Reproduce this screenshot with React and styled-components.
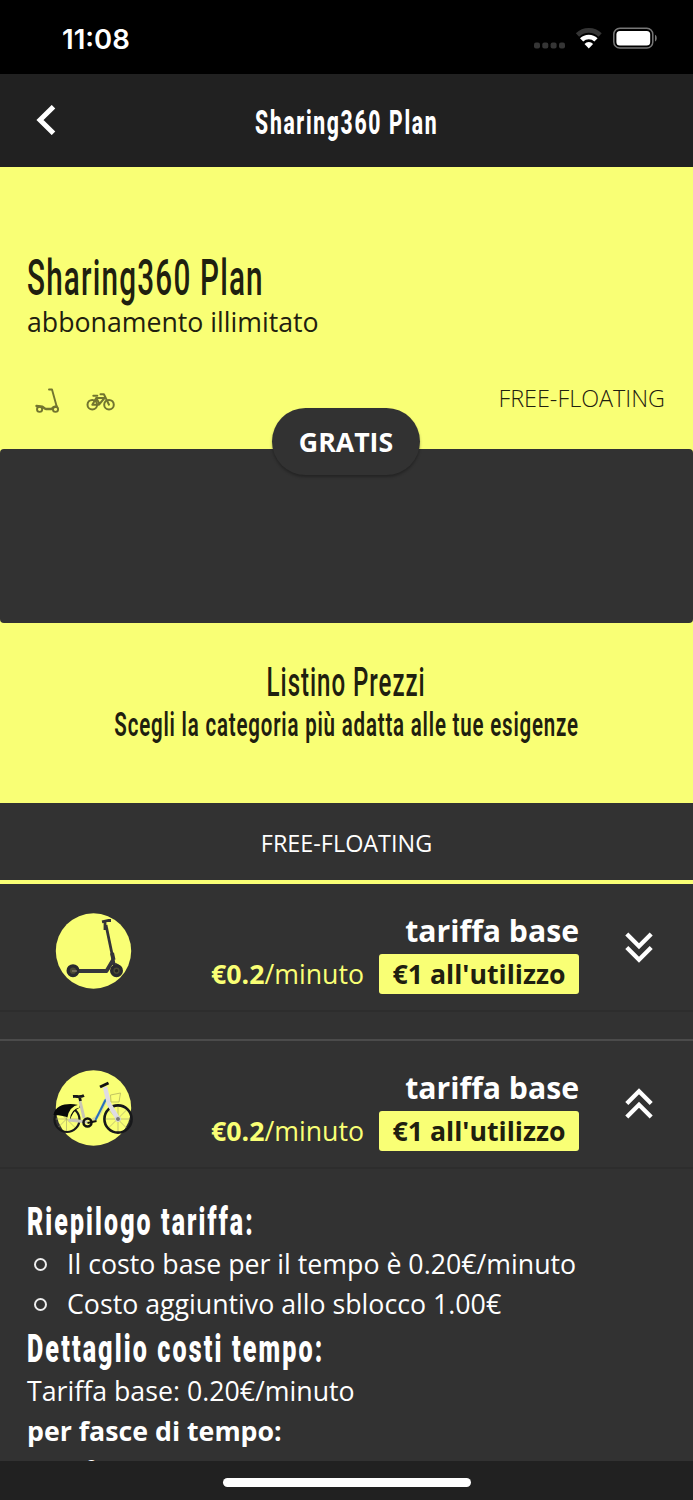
import React, { useState } from 'react'
import styled, { createGlobalStyle, css } from 'styled-components'

const yellow = '#f9ff75'
const dark = '#323232'
const darker = '#212121'
const ink = '#1f200f'

const GlobalStyle = createGlobalStyle`
    *, *::before, *::after { box-sizing: border-box; }
    body {
        margin: 0;
        background: ${dark};
        font-family: 'Open Sans', 'Noto Sans', sans-serif;
        color: #fff;
    }
    h1, h2, h3, p, ul { margin: 0; padding: 0; font-weight: 400; }
`

const Screen = styled.div`
    width: 693px;
    height: 1500px;
    display: flex;
    flex-direction: column;
    overflow: hidden;
`

// condensed display lettering
const Display = styled.span`
    display: inline-block;
    font-family: Roboto, 'Liberation Sans', sans-serif;
    white-space: nowrap;
    letter-spacing: ${p => p.$spacing || '0.04em'};
    font-size: ${p => p.$size}px;
    font-weight: ${p => p.$weight || 400};
    line-height: ${p => p.$line}px;
    transform: scaleX(${p => p.$scale});
    transform-origin: ${p => p.$origin || 'left'} center;
`

const StatusBar = styled.div`
    height: 74px;
    flex: none;
    background: #000;
    display: flex;
    align-items: center;
    justify-content: space-between;
    padding: 3px 36px 0 62px;
`

const Clock = styled.div`
    font-family: Inter, sans-serif;
    font-size: 27.5px;
    font-weight: 600;
    line-height: 32px;
`

const Header = styled.header`
    height: 93px;
    flex: none;
    background: ${darker};
    display: grid;
    grid-template-columns: 93px 1fr 93px;
    align-items: center;
    justify-items: center;
`

const BackButton = styled.button`
    background: none;
    border: 0;
    padding: 0 1px 2px 0;
    display: flex;
`

const HeaderTitle = styled.div`
    padding-top: 3px;
`

const Hero = styled.section`
    height: 282px;
    flex: none;
    background: ${yellow};
    color: ${ink};
    padding: 83px 28px 0 27px;
`

const Subtitle = styled.p`
    font-size: 26.7px;
    line-height: 32px;
`

const HeroFooter = styled.div`
    display: flex;
    justify-content: space-between;
    align-items: center;
    margin-top: 42px;
    height: 36px;

    svg {
        margin: 6px 0 0 7px;
    }
`

const ModeLabel = styled.span`
    font-size: 23.4px;
    font-weight: 300;
`

const PriceArea = styled.div`
    background: ${yellow};
    flex: none;
`

const PricePanel = styled.div`
    position: relative;
    height: 174px;
    background: ${dark};
    border-radius: 4px;
`

const PriceBadge = styled.div`
    position: absolute;
    top: -41px;
    left: 272px;
    width: 148px;
    height: 67px;
    border-radius: 34px;
    background: ${dark};
    box-shadow: 0 2px 3px rgba(0, 0, 0, 0.3);
    display: flex;
    align-items: center;
    justify-content: center;
    font-size: 26.7px;
    font-weight: 700;
`

const ListHeading = styled.section`
    height: 180px;
    flex: none;
    background: ${yellow};
    color: ${ink};
    display: flex;
    flex-direction: column;
    align-items: center;
    padding-top: 35px;
`

const Tab = styled.div`
    height: 81px;
    flex: none;
    border-bottom: 4px solid ${yellow};
    display: flex;
    align-items: center;
    justify-content: center;
    padding-top: 3px;
    font-size: 23.4px;
`

const Row = styled.div`
    height: 128px;
    flex: none;
    display: grid;
    grid-template-columns: 187px 392px 1fr;
    align-items: center;
    border-bottom: 2px solid #2d2d2d;
    ${p => p.$spaced && css`
        height: 130px;
        margin-top: 27px;
        border-top: 2px solid #4b4b4b;
    `}
`

const Thumb = styled.div`
    display: flex;
    justify-content: center;
    padding-top: 7px;
`

const Rates = styled.div`
    display: flex;
    flex-direction: column;
    align-items: flex-end;
    padding-top: 10px;
`

const RateName = styled.div`
    font-size: 30.2px;
    font-weight: 700;
    line-height: 41px;
    padding-bottom: 3px;
`

const RateLine = styled.div`
    display: flex;
    align-items: center;
    gap: 15px;
    color: ${yellow};
    font-size: 26.7px;
    line-height: 40px;
    white-space: nowrap;
`

const Tag = styled.span`
    width: 200px;
    height: 40px;
    border-radius: 3px;
    background: ${yellow};
    color: ${ink};
    font-weight: 700;
    text-align: center;
`

const Toggle = styled.button`
    background: none;
    border: 0;
    padding: 0 0 0 46px;
    display: flex;
`

const Details = styled.section`
    flex: 1;
    min-height: 0;
    overflow: hidden;
    padding: 30px 28px 0 27px;
    font-size: 26.72px;
    line-height: 40px;
`

const DetailTitle = styled.h3`
    height: ${p => p.$height}px;
`

const Bullets = styled.ul`
    list-style: none;
`

const Bullet = styled.li`
    display: flex;
    align-items: center;
    height: 40px;
    padding-left: 7px;

    &::before {
        content: '';
        width: 13px;
        height: 13px;
        margin: 0 20px 0 0;
        border: 2px solid #eee;
        border-radius: 50%;
    }
`

const Strong = styled.p`
    font-weight: 700;
`

const NextLine = styled.p`
    padding-left: 57px;
`

const HomeBar = styled.footer`
    height: 39px;
    flex: none;
    background: ${darker};
    display: flex;
    justify-content: center;
    align-items: flex-start;
    padding-top: 17px;

    &::after {
        content: '';
        width: 248px;
        height: 9px;
        border-radius: 5px;
        background: #fff;
    }
`

const StatusIcons = () => (
    <svg width='124' height='28' viewBox='533 24.5 124 28'>
        <g fill='#353535'>
            <rect x='534' y='42' width='6' height='6' rx='2' />
            <rect x='542.3' y='42' width='6' height='6' rx='2' />
            <rect x='550.6' y='42' width='6' height='6' rx='2' />
            <rect x='559' y='42' width='6' height='6' rx='2' />
        </g>
        <path d='M577.5 34.5a16 16 0 0 1 22.6 0' fill='none' stroke='#353535' strokeWidth='4.6' />
        <path d='M581.6 39.4a10.3 10.3 0 0 1 14.4 0' fill='none' stroke='#fff' strokeWidth='4.6' />
        <path d='M588.8 48l-4.3-4.6a6 6 0 0 1 8.6 0z' fill='#fff' />
        <rect x='613.8' y='27.8' width='39' height='19.8' rx='6' fill='none' stroke='#777' strokeWidth='1.5' />
        <rect x='616.4' y='30.4' width='33.8' height='14.6' rx='3.5' fill='#fff' />
        <path d='M655 34.3c2.3 1 2.3 5.7 0 6.8z' fill='#777' />
    </svg>
)

const ModeIcons = () => (
    <svg width='90' height='30' viewBox='34 386 90 30' fill='none' stroke='#72752f' strokeLinecap='round' strokeLinejoin='round'>
        <g strokeWidth='1.9'>
            <path d='M49 389.5h3l4.7 17' />
            <path d='M36.5 406l6 .8c1.5.8 2 2.2 3.5 2.2h5.5c1.5-2 3-2.5 5-2.5' strokeWidth='2.4' />
            <circle cx='39.6' cy='409.3' r='2.6' />
            <circle cx='55.5' cy='409.3' r='2.6' />
        </g>
        <g strokeWidth='2'>
            <circle cx='92.3' cy='404.7' r='4.8' />
            <circle cx='109' cy='404.7' r='4.8' />
            <path d='M92.3 404.7l4-6.7h8.2l-5.5 6.7h-6.7M93.3 395.8h4M96.3 398l3.3 6.2M100.5 394.2h3.4l5.1 10.5' />
        </g>
    </svg>
)

const ScooterPicture = () => (
    <svg width='80' height='80' viewBox='53.5 911 80 80'>
        <circle cx='93' cy='951' r='37.7' fill={yellow} />
        <path d='M105.5 925l8.5 41' stroke='#343438' strokeWidth='2.8' />
        <path d='M104.5 930v-8M101.5 921.8l6.5-1.3h2.5' stroke='#343438' strokeWidth='2.8' fill='none' />
        <path d='M111.5 953l1.5 7' stroke='#343438' strokeWidth='4' />
        <path d='M74 971h32l6.5-11' stroke='#36373c' strokeWidth='3.8' fill='none' strokeLinejoin='round' />
        <path d='M108 970c1-8 9-8 13-1' stroke='#343438' strokeWidth='1.5' fill='none' />
        <g fill='#4b4b35' stroke='#292a2e' strokeWidth='3.4'>
            <circle cx='72.5' cy='970.7' r='4.8' />
            <circle cx='116' cy='970.7' r='4.8' />
        </g>
        <path d='M71.5 971h5' stroke='#8b8170' strokeWidth='1.2' />
        <circle cx='116' cy='970.7' r='1.7' fill='#222' />
    </svg>
)

const BikePicture = () => (
    <svg width='84' height='80' viewBox='51.5 1068 84 80'>
        <circle cx='93' cy='1108' r='37.7' fill={yellow} />
        <g fill='none'>
            <g stroke='#9da06b' strokeWidth='.6'>
                <path d='M66 1106v26M54 1119h24M57 1110l18 18M75 1110l-18 18' />
                <path d='M117.5 1106v26M104 1119h26M108 1110l18 18M126 1110l-18 18' />
            </g>
            <circle cx='66.5' cy='1119.5' r='12.5' stroke='#17181a' strokeWidth='2.2' />
            <circle cx='117.5' cy='1119' r='13.6' stroke='#17181a' strokeWidth='2.6' />
            <path d='M53 1115c1-8 9-11 17-11 5 0 9 1 11 3-6 2-9 6-11 12-5-3-10-4-17-4z' fill='#080909' />
            <path d='M68 1119c1-8 5-12 11-13' stroke={yellow} strokeWidth='2.8' />
            <path d='M79.5 1101l4 17M68 1120l19 2' stroke='#c9c6b6' strokeWidth='3' />
            <path d='M92 1120c6-2 8-9 13-20' stroke='#d8d89a' strokeWidth='3.5' />
            <path d='M95 1120l10.5-21' stroke='#2670bb' strokeWidth='2' />
            <path d='M104.5 1087l4 17 9 15' stroke='#dfdce2' strokeWidth='4.5' />
            <path d='M99.5 1087l8.5-4' stroke='#111' strokeWidth='3' />
            <path d='M110 1095l10-2-1.5 9h-8z' stroke='#c2c562' strokeWidth='1' />
            <path d='M72.5 1096.5c4-.5 7 1 11-1M79 1097l1 4' stroke='#17181a' strokeWidth='2.8' />
            <circle cx='87' cy='1122.5' r='4' stroke='#111' strokeWidth='2.5' />
            <path d='M87 1123l9-2' stroke='#111' strokeWidth='2' />
            <circle cx='117.5' cy='1119' r='2.5' fill='#777' stroke='#ddd' />
        </g>
    </svg>
)

const DoubleChevron = ({ up }) => (
    <svg width='28' height='32' viewBox='0 0 28 32' fill='none' stroke='#fff' strokeWidth='4.3'>
        {up
            ? <path d='M1.8 15.5L14 3.3l12.2 12.2M1.8 29L14 16.8 26.2 29' />
            : <path d='M1.8 3L14 15.2 26.2 3M1.8 16.5L14 28.7l12.2-12.2' />}
    </svg>
)

const Tariff = ({ picture, open, spaced, onToggle }) => (
    <Row $spaced={spaced}>
        <Thumb>{picture}</Thumb>
        <Rates>
            <RateName>tariffa base</RateName>
            <RateLine>
                <span><b>€0.2</b>/minuto</span>
                <Tag>€1 all'utilizzo</Tag>
            </RateLine>
        </Rates>
        <Toggle onClick={onToggle}><DoubleChevron up={open} /></Toggle>
    </Row>
)

const App = () => {

    const [open, setOpen] = useState(true)

    return (
        <Screen>
            <GlobalStyle />
            <StatusBar>
                <Clock>11:08</Clock>
                <StatusIcons />
            </StatusBar>
            <Header>
                <BackButton>
                    <svg width='20' height='30' viewBox='0 0 20 30' fill='none' stroke='#fff' strokeWidth='5'>
                        <path d='M17.5 1.7L4 15l13.5 13.3' />
                    </svg>
                </BackButton>
                <HeaderTitle>
                    <Display $size={34} $weight={800} $line={54} $scale={0.62} $spacing='0.08em' $origin='center'>Sharing360 Plan</Display>
                </HeaderTitle>
            </Header>
            <Hero>
                <h1><Display $size={49.5} $weight={500} $line={56} $scale={0.6}>Sharing360 Plan</Display></h1>
                <Subtitle>abbonamento illimitato</Subtitle>
                <HeroFooter>
                    <ModeIcons />
                    <ModeLabel>FREE-FLOATING</ModeLabel>
                </HeroFooter>
            </Hero>
            <PriceArea>
                <PricePanel>
                    <PriceBadge>GRATIS</PriceBadge>
                </PricePanel>
            </PriceArea>
            <ListHeading>
                <h2><Display $size={41.5} $weight={500} $line={48} $scale={0.58} $origin='center'>Listino Prezzi</Display></h2>
                <p><Display $size={33} $weight={600} $line={38} $scale={0.62} $origin='center'>Scegli la categoria più adatta alle tue esigenze</Display></p>
            </ListHeading>
            <Tab>FREE-FLOATING</Tab>
            <Tariff picture={<ScooterPicture />} />
            <Tariff picture={<BikePicture />} spaced open={open} onToggle={() => setOpen(!open)} />
            <Details>
                {open && (
                    <>
                        <DetailTitle $height={45}><Display $size={38} $weight={900} $line={46} $scale={0.655} $spacing='0.085em'>Riepilogo tariffa:</Display></DetailTitle>
                        <Bullets>
                            <Bullet>Il costo base per il tempo è 0.20€/minuto</Bullet>
                            <Bullet>Costo aggiuntivo allo sblocco 1.00€</Bullet>
                        </Bullets>
                        <DetailTitle $height={47}><Display $size={38} $weight={900} $line={51} $scale={0.66} $spacing='0.085em'>Dettaglio costi tempo:</Display></DetailTitle>
                        <p>Tariffa base: 0.20€/minuto</p>
                        <Strong>per fasce di tempo:</Strong>
                        <NextLine>f</NextLine>
                    </>
                )}
            </Details>
            <HomeBar />
        </Screen>
    )
}

export default App
